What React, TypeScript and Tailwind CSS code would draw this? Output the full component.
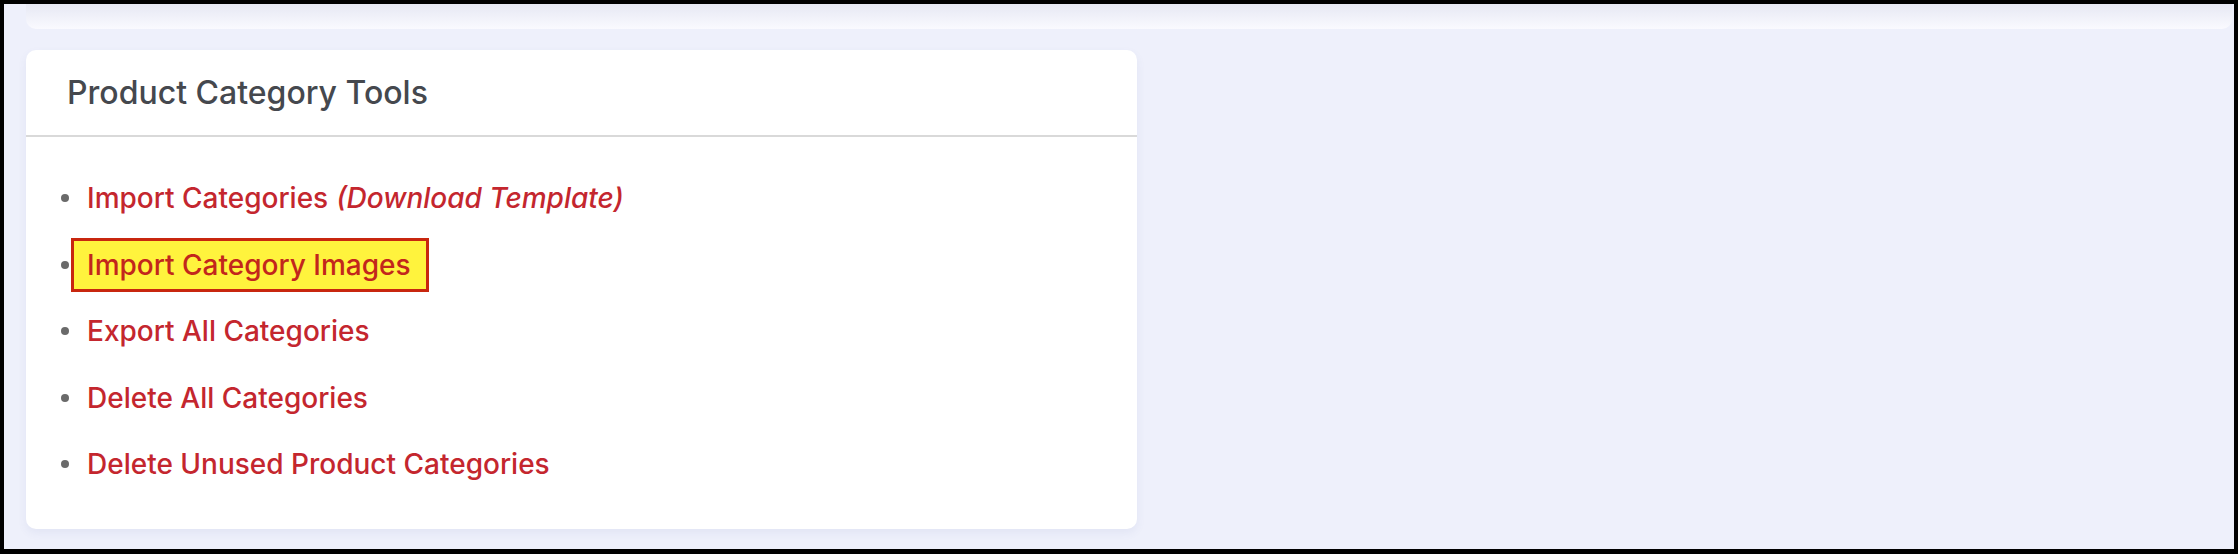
import React from "react";

const items = [
  { label: "Import Categories", extra: "(Download Template)" },
  { label: "Import Category Images", highlight: true },
  { label: "Export All Categories" },
  { label: "Delete All Categories" },
  { label: "Delete Unused Product Categories" },
];

export default function App() {
  return (
    <div className="w-[2238px] h-[554px] box-border border-black border-t-4 border-x-4 border-b-[5px] bg-[#eef0fb] font-['Inter',sans-serif] overflow-hidden flex flex-col">
      <div className="h-[25px] shrink-0 ml-[22px] mr-[2px] rounded-b-[10px] bg-linear-to-b from-[#e6e8f3] to-[#fafaff]" />
      <div className="mt-[21px] ml-[22px] w-[1111px] h-[479px] shrink-0 bg-white rounded-[10px] shadow-[0_4px_10px_rgba(70,80,160,0.07)] flex flex-col">
        <div className="h-[87px] shrink-0 flex items-center pl-[41px] border-b-2 border-[#d9d9d9]">
          <h2 className="text-[32px] font-medium text-[#45484e] leading-none">Product Category Tools</h2>
        </div>
        <ul className="pt-[28px] pl-[35px]">
          {items.map((it) => (
            <li key={it.label} className="h-[66.5px] flex items-center">
              <span className="w-[8px] h-[8px] rounded-full bg-[#6a6a6a] shrink-0" />
              {it.highlight ? (
                <span className="ml-[2px] h-[54px] flex items-center border-[3px] border-[#c8260f] bg-[#fff33d] pl-[13px] pr-[15px] text-[28px] font-medium text-[#c2261c] leading-none">
                  {it.label}
                </span>
              ) : (
                <span className="ml-[18px] text-[28px] font-medium text-[#c4262e] leading-none">
                  {it.label}
                  {it.extra && <em className="italic ml-[8px]">{it.extra}</em>}
                </span>
              )}
            </li>
          ))}
        </ul>
      </div>
    </div>
  );
}
